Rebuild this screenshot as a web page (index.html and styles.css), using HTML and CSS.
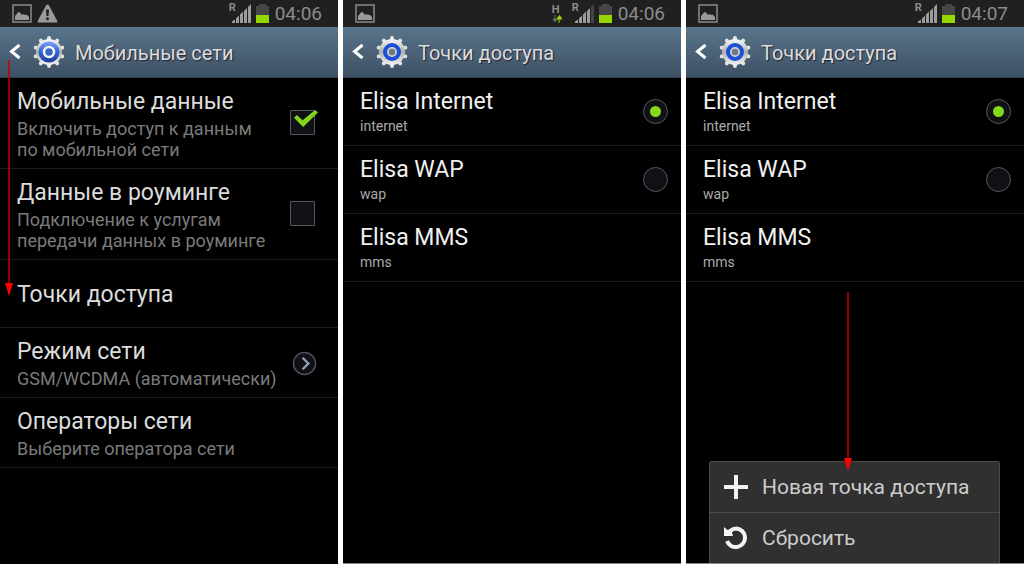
FILE: index.html
```
<!DOCTYPE html>
<html lang="ru">
<head>
    <meta charset="utf-8">
    <title>Мобильные сети</title>
    <link rel="stylesheet" href="styles.css">
</head>
<body>
    <!-- shared icons -->
    <svg class="defs" width="0" height="0" aria-hidden="true">
        <defs>
            <linearGradient id="blue" x1="0" y1="0" x2="0" y2="1">
                <stop offset="0" stop-color="#7ba0fa"/>
                <stop offset="0.5" stop-color="#3262d2"/>
                <stop offset="1" stop-color="#173d9c"/>
            </linearGradient>
            <linearGradient id="silver" x1="0" y1="0" x2="0" y2="1">
                <stop offset="0" stop-color="#fafafa"/>
                <stop offset="0.5" stop-color="#b0b0b0"/>
                <stop offset="1" stop-color="#f4f4f4"/>
            </linearGradient>
            <symbol id="picture" viewBox="0 0 20 19">
                <rect x="1" y="1" width="18" height="17" fill="none" stroke="#8a8a8a" stroke-width="1.500"/>
                <path d="M3 16V12L6 8.500Q7 7.500 8 8.500L10 11L11.500 10L13 11L14.500 10.500L17 13V16Z" fill="#9a9a9a"/>
            </symbol>
            <symbol id="warning" viewBox="0 0 21 19">
                <path d="M10.500 0.500Q11.400 0.500 12 1.500L20.300 17Q20.800 18.500 19.500 18.500H1.500Q0.200 18.500 0.700 17L9 1.500Q9.600 0.500 10.500 0.500Z" fill="#9a9a9a"/>
                <path d="M9 5.500H12L11.500 12H9.500Z" fill="#202020"/>
                <circle cx="10.500" cy="14.800" r="1.500" fill="#202020"/>
            </symbol>
            <symbol id="bars" viewBox="0 0 21 19">
                <path d="M1 19V17.500L4 15.500V19ZM5 19V14.500L8 11.500V19ZM9 19V10.500L12 7.500V19ZM13 19V7L16 4V19Z" fill="#9c9c9c"/>
                <path d="M17 19V3L20 0V19Z"/>
            </symbol>
            <symbol id="battery" viewBox="0 0 13 19">
                <path d="M3 0H10V2H13V11H0V2H3Z" fill="#464646"/>
                <path d="M0 11H13V19H0Z" fill="#97d700"/>
            </symbol>
            <symbol id="back" viewBox="0 0 12 18">
                <path d="M10.500 2L2.500 8.500L10.500 15" fill="none" stroke="#fff" stroke-width="3"/>
            </symbol>
            <symbol id="cog" viewBox="0 0 32 32">
                <path d="M16 2V30M24.200 4.700L7.800 27.300M29.300 11.700L2.700 20.300M29.300 20.300L2.700 11.700M24.200 27.300L7.800 4.700" stroke="#e4e4e4" stroke-width="4" stroke-linecap="round"/>
                <circle cx="16" cy="16" r="13" fill="url(#silver)"/>
            </symbol>
            <symbol id="gear" viewBox="0 0 32 32">
                <use href="#cog"/>
                <circle cx="16" cy="16" r="10.500" fill="url(#blue)"/>
                <circle cx="16" cy="16" r="5" fill="#3768c4" stroke="#f4f4f4" stroke-width="2.500"/>
            </symbol>
            <symbol id="gear-small" viewBox="0 0 32 32">
                <use href="#cog"/>
                <circle cx="16" cy="16" r="7" fill="#c0c8d0" stroke="#1c50d6" stroke-width="4"/>
                <circle cx="16" cy="16" r="4" fill="#6c7a86" stroke="#d0d0d0" stroke-width="1.500"/>
            </symbol>
        </defs>
    </svg>

    <main class="screens">
        <section class="screen">
            <div class="status-bar">
                <svg class="notice" width="20" height="19"><use href="#picture"/></svg>
                <svg class="notice" width="21" height="19"><use href="#warning"/></svg>
                <span class="roaming">R</span>
                <svg class="signal" width="21" height="19"><use href="#bars"/></svg>
                <svg class="battery" width="13" height="19"><use href="#battery"/></svg>
                <time>04:06</time>
            </div>
            <header class="action-bar">
                <button class="back" aria-label="Назад"><svg width="12" height="18"><use href="#back"/></svg></button>
                <svg class="gear" width="32" height="32"><use href="#gear"/></svg>
                <h1>Мобильные сети</h1>
            </header>
            <div class="settings">
                <label class="row">
                    <span class="text">
                        <span class="name">Мобильные данные</span>
                        <span class="summary">Включить доступ к данным<br>по мобильной сети</span>
                    </span>
                    <input type="checkbox" checked>
                </label>
                <label class="row">
                    <span class="text">
                        <span class="name">Данные в роуминге</span>
                        <span class="summary">Подключение к услугам<br>передачи данных в роуминге</span>
                    </span>
                    <input type="checkbox">
                </label>
                <button class="row single">
                    <span class="name">Точки доступа</span>
                </button>
                <button class="row">
                    <span class="text">
                        <span class="name">Режим сети</span>
                        <span class="summary">GSM/WCDMA (автоматически)</span>
                    </span>
                    <svg class="more" width="25" height="25" viewBox="0 0 26 26">
                        <circle cx="13" cy="13" r="11.500" fill="#0f1114" stroke="#4c5157" stroke-width="1.500"/>
                        <path d="M11 7L17 13L11 19" fill="none" stroke="#8fa3b5" stroke-width="2.500"/>
                    </svg>
                </button>
                <button class="row">
                    <span class="text">
                        <span class="name">Операторы сети</span>
                        <span class="summary">Выберите оператора сети</span>
                    </span>
                </button>
            </div>
            <svg class="pointer to-access" width="8" height="236" viewBox="0 0 8 236">
                <path d="M4 0V226" stroke="#c40000" stroke-width="1.500"/>
                <path d="M0 223H8L4 236Z" fill="#f00"/>
            </svg>
        </section>

        <section class="screen">
            <div class="status-bar">
                <svg class="notice" width="20" height="19"><use href="#picture"/></svg>
                <span class="network">H
                    <svg width="10" height="8" viewBox="0 0 10 8">
                        <path d="M3 0V5M1 4L3 7L5 4Z" fill="#666" stroke="#666"/>
                        <path d="M7 8V2M5 4L7.500 0.500L10 4Z" fill="#97d700" stroke="#97d700"/>
                    </svg>
                </span>
                <span class="roaming">R</span>
                <svg class="signal weak" width="21" height="19"><use href="#bars"/></svg>
                <svg class="battery" width="13" height="19"><use href="#battery"/></svg>
                <time>04:06</time>
            </div>
            <header class="action-bar">
                <button class="back" aria-label="Назад"><svg width="12" height="18"><use href="#back"/></svg></button>
                <svg class="gear" width="32" height="32"><use href="#gear-small"/></svg>
                <h1>Точки доступа</h1>
            </header>
            <div class="apn-list">
                <label class="row">
                    <span class="text">
                        <span class="name">Elisa Internet</span>
                        <span class="summary">internet</span>
                    </span>
                    <input type="radio" name="apn" checked>
                </label>
                <label class="row">
                    <span class="text">
                        <span class="name">Elisa WAP</span>
                        <span class="summary">wap</span>
                    </span>
                    <input type="radio" name="apn">
                </label>
                <div class="row">
                    <span class="text">
                        <span class="name">Elisa MMS</span>
                        <span class="summary">mms</span>
                    </span>
                </div>
            </div>
        </section>

        <section class="screen">
            <div class="status-bar">
                <svg class="notice" width="20" height="19"><use href="#picture"/></svg>
                <span class="roaming">R</span>
                <svg class="signal" width="21" height="19"><use href="#bars"/></svg>
                <svg class="battery" width="13" height="19"><use href="#battery"/></svg>
                <time>04:07</time>
            </div>
            <header class="action-bar">
                <button class="back" aria-label="Назад"><svg width="12" height="18"><use href="#back"/></svg></button>
                <svg class="gear" width="32" height="32"><use href="#gear-small"/></svg>
                <h1>Точки доступа</h1>
            </header>
            <div class="apn-list">
                <label class="row">
                    <span class="text">
                        <span class="name">Elisa Internet</span>
                        <span class="summary">internet</span>
                    </span>
                    <input type="radio" name="apn-menu" checked>
                </label>
                <label class="row">
                    <span class="text">
                        <span class="name">Elisa WAP</span>
                        <span class="summary">wap</span>
                    </span>
                    <input type="radio" name="apn-menu">
                </label>
                <div class="row">
                    <span class="text">
                        <span class="name">Elisa MMS</span>
                        <span class="summary">mms</span>
                    </span>
                </div>
            </div>
            <div class="menu">
                <button>
                    <svg width="24" height="24" viewBox="0 0 24 24">
                        <path d="M12 0V24M0 12H24" stroke="#f4f4f4" stroke-width="4"/>
                    </svg>
                    Новая точка доступа
                </button>
                <button>
                    <svg width="24" height="24" viewBox="0 0 24 24">
                        <path d="M6 5Q9 2.500 12.500 2.500A9.300 9.300 0 1 1 3 15" fill="none" stroke="#f4f4f4" stroke-width="4"/>
                        <path d="M0 1L3.500 4L7 3L9 10H0Z" fill="#f4f4f4"/>
                    </svg>
                    Сбросить
                </button>
            </div>
            <svg class="pointer to-menu" width="8" height="179" viewBox="0 0 8 179">
                <path d="M4 0V169" stroke="#c40000" stroke-width="1.500"/>
                <path d="M0 166H8L4 179Z" fill="#f00"/>
            </svg>
        </section>
    </main>
</body>
</html>
```

FILE: styles.css
```
* {
    box-sizing: border-box;
}

body {
    margin: 0;
    background: #fff;
    font-family: Roboto, "Noto Sans", sans-serif;
}

button {
    border: none;
    background: none;
    color: inherit;
    font: inherit;
    text-align: left;
    cursor: pointer;
}

svg {
    display: block;
    flex: none;
}

.defs {
    position: absolute;
}

.screens {
    display: grid;
    grid-template-columns: repeat(3, 1fr);
    gap: 5px;
    min-height: 100vh;
}

.screen {
    position: relative;
    background: #000;
    color: #dcdcdc;
    overflow: hidden;
}

.screen + .screen {
    border-bottom: 1px solid #8a8a8a;
}

/* status bar */
.status-bar {
    display: flex;
    align-items: center;
    height: 27px;
    padding: 0 16px 0 12px;
    background: #202020;
    color: #8c8c8c;
}

.notice {
    margin-right: 5px;
}

.roaming {
    align-self: flex-start;
    margin-left: auto;
    padding-top: 2px;
    font-size: 11px;
    font-weight: bold;
    line-height: 12px;
}

.network {
    margin-left: auto;
    margin-right: 10px;
    font-size: 11px;
    font-weight: bold;
    line-height: 10px;
}

.network + .roaming {
    margin-left: 0;
}

.signal {
    margin-left: -5px;
    fill: #9c9c9c;
}

.signal.weak {
    fill: #444;
}

.battery {
    margin: 0 6px 0 4px;
}

time {
    font-size: 19px;
}

/* title bar */
.action-bar {
    display: flex;
    align-items: center;
    height: 51px;
    padding-left: 9px;
    border-bottom: 1px solid #2c4052;
    background: linear-gradient(#59758b, #3d5064);
}

.back {
    padding: 0;
}

.gear {
    margin: 0 10px 0 12px;
}

h1 {
    margin: 0;
    padding-top: 2px;
    font-size: 20px;
    font-weight: normal;
    text-shadow: 1px 1px 1px #223;
}

/* lists */
.row {
    display: flex;
    align-items: center;
    justify-content: space-between;
    width: 100%;
    padding: 9px 21px 8px 17px;
    border-bottom: 1px solid #1c1c1c;
}

.row.single {
    height: 68px;
}

.name,
.summary {
    display: block;
}

.name {
    font-size: 23px;
    line-height: 29px;
}

.summary {
    margin-top: 2px;
    color: #7a7a7a;
    font-size: 18px;
    line-height: 21px;
    white-space: nowrap;
}

.apn-list .row {
    padding-right: 13px;
}

.apn-list .name {
    color: #f0f0f0;
}

.apn-list .summary {
    margin-top: 0;
    color: #aaa;
    font-size: 14px;
}

input {
    flex: none;
    position: relative;
    width: 25px;
    height: 25px;
    margin: 0 0 2px;
    border: 1px solid #555a60;
    background: #0f1114;
    appearance: none;
}

input[type="checkbox"] {
    border-radius: 1px;
    margin-right: 2px;
}

input[type="radio"] {
    border-radius: 50%;
}

input[type="checkbox"]:checked::after {
    content: "";
    position: absolute;
    left: 3px;
    top: -1px;
    width: 24px;
    height: 17px;
    background: #82d41a;
    clip-path: polygon(0 46%, 12% 30%, 36% 60%, 88% 0, 100% 14%, 38% 100%);
}

input[type="radio"]:checked::after {
    content: "";
    position: absolute;
    inset: 6px;
    border-radius: 50%;
    background: #86d81c;
}

/* options menu */
.menu {
    position: absolute;
    left: 23px;
    right: 24px;
    bottom: 0;
    border: 1px solid #4c4c4c;
    border-bottom: none;
    border-radius: 3px 3px 0 0;
    background: #303030;
}

.menu button {
    display: flex;
    align-items: center;
    gap: 14px;
    width: 100%;
    height: 50px;
    padding: 0 14px;
    color: #ccc;
    font-size: 21px;
}

.menu button + button {
    height: 51px;
    border-top: 1px solid #4c4c4c;
}

/* red arrows */
.pointer {
    position: absolute;
}

.to-access {
    left: 5px;
    top: 60px;
}

.to-menu {
    left: 158px;
    top: 292px;
}
```
